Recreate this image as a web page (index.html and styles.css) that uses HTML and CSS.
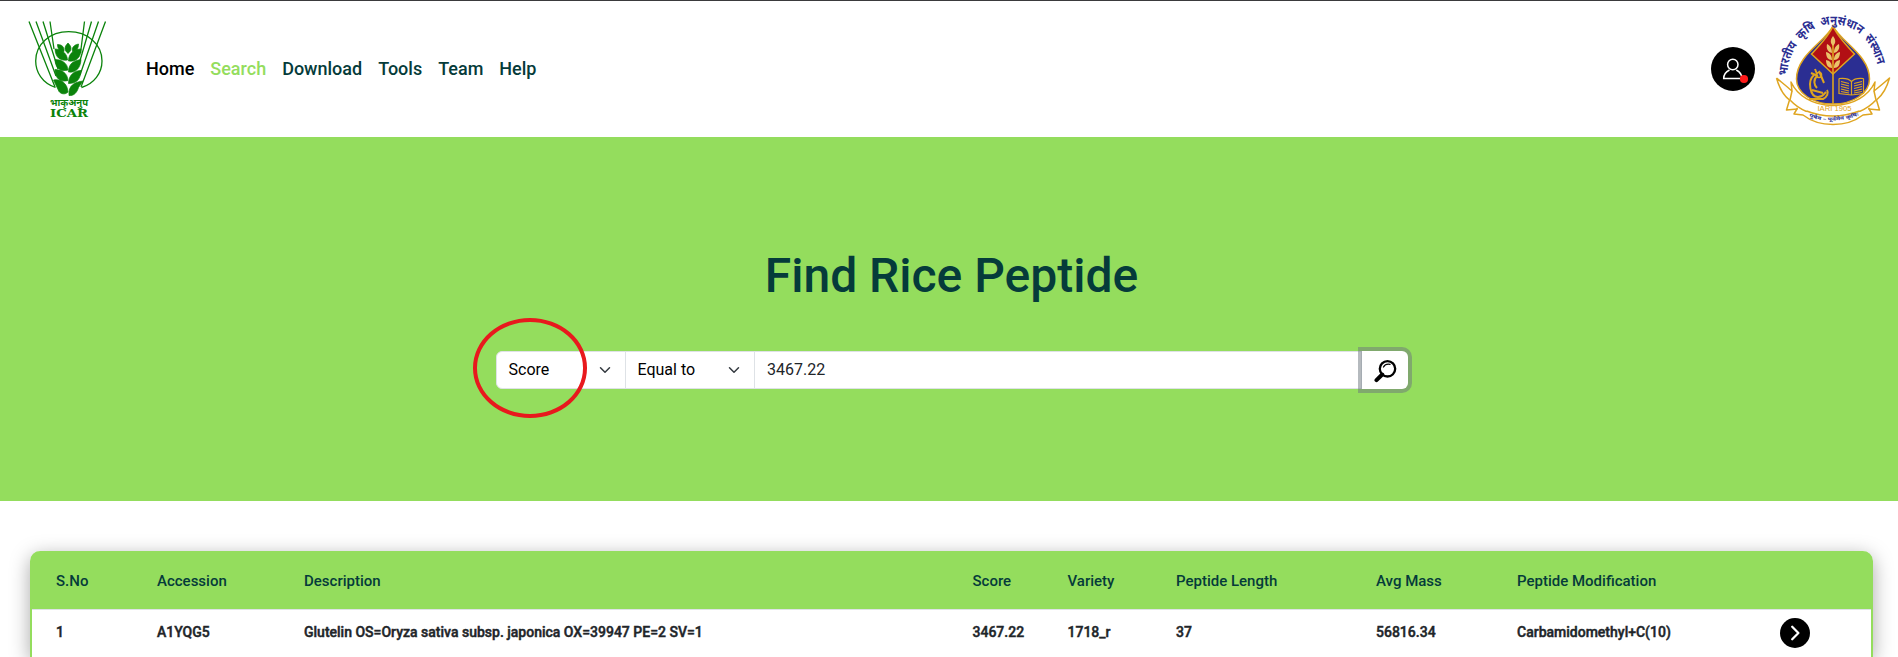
FILE: index.html
```html
<!DOCTYPE html>
<html lang="en">
<head>
<meta charset="utf-8">
<title>Find Rice Peptide</title>
<link rel="stylesheet" href="styles.css">
</head>
<body>
<header class="topbar">
  <svg class="icar" viewBox="26 18 84 102" role="img" aria-label="ICAR">
    <g fill="none" stroke="#0b830b" stroke-width="1.3">
      <path d="M29 21.500 55 87M36 21.500 56 76M43 21.500 58 69M50 21.500 54 49M105.500 21.500 81 87M98.500 21.500 80 75M91.500 21.500 79 64M84.500 21.500 80.500 53"/>
      <path d="M55.500 87.500C42 83 35.700 72 35.700 61 35.700 44 50 31.700 68.700 31.700S102 44 102 61C102 73 94 84 81.500 87.500"/>
    </g>
    <g fill="#0b830b" stroke="#0b830b" stroke-width=".7" stroke-linejoin="round">
      <path d="M55 49c5 0 12 3 12.500 11-7 1-12-2-12.500-11z"/>
      <path d="M55 59.500c6 0 12.500 3 13 10.500-7 2-12.500-1-13-10.500zM55 69.500c6 0 12.500 3 13 11-7 2-13-1.500-13-11zM53.500 80c7-1.500 14 3 14.500 12-3 3-7 2-9-.5z"/>
      <path d="M81 49c-5 0-12.500 3-12.500 12 7 1 12.500-3 12.500-12zM81 59.500c-6 1-12.500 3-12.500 12.500 7 1 12-3.500 12.500-12.500zM81 70.500c-7 0-12.500 5-12.500 13 8 0 12-4 12.500-13zM83 81c-8 1-15 4-14 14.500 5 .5 8-3 9.500-8z"/>
      <path d="M68 43c4 4 4 7 0 10.500-4-3.500-4-6.500 0-10.500zM57.500 44.500c5 0 7 3 6.500 7-4 0-6.500-2.500-6.500-7zM78.500 44c-5 1-7 4-6 7.500 4-.5 6-3 6-7.500z"/>
    </g>
    <text class="icar-hindi" x="69" y="105.500" textLength="38" lengthAdjust="spacingAndGlyphs">भाकृअनुप</text>
    <text class="icar-name" x="69" y="116.500" textLength="38" lengthAdjust="spacingAndGlyphs">ICAR</text>
  </svg>
  <nav class="nav">
    <a class="nav-home">Home</a><a class="nav-active">Search</a><a>Download</a><a>Tools</a><a>Team</a><a>Help</a>
  </nav>
  <svg class="user" viewBox="0 0 44 44">
    <circle cx="22" cy="22" r="22"/>
    <circle cx="21.800" cy="17.500" r="5.200" fill="none" stroke="#fff" stroke-width="1.500"/>
    <path d="M18.500 23C14.500 25 12.700 28 12.700 31.500H31C31 28 29 25 25.300 23" fill="none" stroke="#fff" stroke-width="1.500"/>
    <circle cx="33" cy="32" r="4.100" fill="#ff1a1a"/>
  </svg>
  <svg class="iari" viewBox="84 0 118 136" role="img" aria-label="IARI">
    <defs>
      <path id="arc" d="M97 75C98 49 117 23.500 143 23.500S186 44 190 78"/>
      <path id="motto" d="M118 115.500Q143 125 173 113"/>
    </defs>
    <path fill="#2b2e92" stroke="#dfa520" stroke-width="1.500" d="M143 25C135 41 106.500 54 106.500 78c0 14 16 25 36.500 25s36.500-11 36.500-25c0-24-28.500-37-36.500-53z"/>
    <path fill="#b20f14" stroke="#dfa520" stroke-width="1.500" d="M143 25c-4 10-13 19-21.500 28L143 73l21.500-20C156 44 147 35 143 25z"/>
    <g stroke="#dfa520" fill="none" stroke-width="1.600">
      <path d="M143 42v61"/>
      <path d="M125 68l2 5M121 72l7 3M124 74c-7 6-4 22 4 22 5 0 6-3 8-5M127 75c-4 4-3 9 0 12M119 98h14c4-2 6-6 4-9M129 70l5 12M122 89l11 3" stroke-width="2"/>
      <circle cx="129" cy="74" r="2.500"/>
      <path stroke-width="1.200" d="M149 77.500v15l12.500 1.500 12-1.500v-15M149 77.500q9-1 12.500 3 3.500-4 12-3M161.500 81v13M151 80.500l8 2M151 83l8 2M151 85.500l8 2M151 88l8 2M151 90.500l8 1.500M164 82.500l8-2M164 85l8-2M164 87.500l8-2M164 90l8-2M164 92l8-1.500"/>
    </g>
    <g fill="#eac36a">
      <path d="M143 35c3 4 3 7 0 10-3-3-3-6 0-10zM137 43c4 2 5 5 5 9-4-1-6-4-5-9zM149 43c-4 2-5 5-5 9 4-1 6-4 5-9zM136 51c5 1 6 5 6 8-4 0-6-3-6-8zM150 51c-5 1-6 5-6 8 4 0 6-3 6-8zM136 59c5 1 6 4 6 8-4 0-6-3-6-8zM150 59c-5 1-6 4-6 8 4 0 6-3 6-8z"/>
    </g>
    <g fill="none" stroke="#dfa520" stroke-width="1.500" stroke-linejoin="round">
      <path d="M86.500 77c6 5 11 9 15.500 13l-1-9c6 13 21 23.500 42 23.500s36-10.500 42-23.500l-1 9c5-4 10-8 15.500-13-3 11-8 18-13 22l3 10-11-1M86.500 77c3 11 8 18 13 22l-3 10 11-1"/>
      <path d="M100 99q7 7.500 16.500 11.500M186 99q-7 7.500-16.500 11.500M107.500 107l-3.500 6 9 1c9 7 19 9.500 30 9.500s21-2.500 30-9.500l9-1-3.500-6M116.500 110q26 10 53 0M102 90l-2 9M184 90l2 9"/>
    </g>
    <text class="iari-year" x="144.500" y="110.300" textLength="34" lengthAdjust="spacingAndGlyphs">IARI 1905</text>
    <text class="iari-name"><textPath href="#arc" textLength="141" lengthAdjust="spacingAndGlyphs">भारतीय कृषि अनुसंधान संस्थान</textPath></text>
    <text class="iari-motto"><textPath href="#motto" startOffset="1" textLength="51" lengthAdjust="spacingAndGlyphs">पूषैव – पूर्वमेव कृषिः</textPath></text>
  </svg>
</header>

<section class="hero">
  <h1 class="title">Find Rice Peptide</h1>
  <form class="search">
    <div class="select first">Score<svg class="chevron" viewBox="0 0 16 16"><path d="m2 5 6 6 6-6"/></svg></div>
    <div class="select">Equal to<svg class="chevron" viewBox="0 0 16 16"><path d="m2 5 6 6 6-6"/></svg></div>
    <div class="value">3467.22</div>
    <button class="go" type="button" aria-label="Search">
      <svg viewBox="0 0 24 24"><circle cx="14.500" cy="9.800" r="7.700" fill="none" stroke="#000" stroke-width="2.300"/><path d="M9.200 15.500 3.500 21.200" stroke="#000" stroke-width="4" stroke-linecap="round"/><path d="M10.500 8q2-3.500 6.500-2.600" fill="none" stroke="#000" stroke-width="1.300" stroke-linecap="round"/></svg>
    </button>
    <span class="marker"></span>
  </form>
</section>

<main class="results">
  <div class="row head">
    <span>S.No</span><span>Accession</span><span>Description</span><span>Score</span><span>Variety</span><span>Peptide Length</span><span>Avg Mass</span><span>Peptide Modification</span><span></span>
  </div>
  <div class="row item">
    <span>1</span><span>A1YQG5</span><span>Glutelin OS=Oryza sativa subsp. japonica OX=39947 PE=2 SV=1</span><span>3467.22</span><span>1718_r</span><span>37</span><span>56816.34</span><span>Carbamidomethyl+C(10)</span>
    <svg class="open" viewBox="0 0 30 30"><circle cx="15" cy="15" r="15"/><path d="M12.200 8.800 18.400 15 12.200 21.200" fill="none" stroke="#fff" stroke-width="2.300" stroke-linecap="round" stroke-linejoin="round"/></svg>
  </div>
</main>
</body>
</html>
```
FILE: styles.css
```css
* { box-sizing: border-box; }
body {
  margin: 0;
  height: 657px;
  overflow: hidden;
  background: #fff;
  color: #212529;
  font-family: Roboto, "Liberation Sans", sans-serif;
}
.topbar {
  display: flex;
  align-items: center;
  height: 137px;
  padding: 0 6px 0 26px;
  border-top: 1px solid #3a3a3c;
}
.icar { width: 84px; height: 102px; }
.icar-hindi { font: 700 10px "Noto Sans", sans-serif; fill: #0b830b; text-anchor: middle; }
.icar-name { font: 700 10.5px "DejaVu Serif", serif; fill: #0b830b; text-anchor: middle; }
.nav {
  display: flex;
  gap: 16px;
  margin: 0 auto 0 36px;
  padding-bottom: 2px;
  font-size: 18px;
  font-weight: 500;
  line-height: 27px;
  color: #053b3a;
}
.nav-home { color: #000; }
.nav-active { color: #94dd5d; }
.user { width: 44px; height: 44px; margin-right: 19px; }
.iari { width: 118px; height: 136px; overflow: visible; }
.iari-name { font: 700 12.5px "Noto Sans", sans-serif; word-spacing: 3px; fill: #2b2e92; }
.iari-year { font: 6.5px "Liberation Sans", sans-serif; fill: #dfa520; text-anchor: middle; }
.iari-motto { font: 700 5px "Noto Sans", sans-serif; fill: #2b2e92; }

.hero {
  height: 364px;
  padding-top: 110px;
  background: #94dd5d;
}
.title {
  margin: 0 0 46px;
  padding-left: 5px;
  text-align: center;
  font-size: 48px;
  font-weight: 500;
  line-height: 58px;
  color: #053b3a;
}
.search {
  position: relative;
  display: flex;
  width: 912px;
  height: 38px;
  margin-left: 496px;
  font-size: 16px;
}
.select, .value {
  display: flex;
  align-items: center;
  background: #fff;
  border: 1px solid #dee2e6;
  line-height: 24px;
}
.select {
  justify-content: space-between;
  width: 130px;
  margin-right: -1px;
  padding-left: 11.500px;
  padding-right: 12px;
  color: #000;
}
.first { border-radius: 6px 0 0 6px; }
.chevron { width: 16px; height: 12px; fill: none; stroke: #343a40; stroke-width: 2; stroke-linecap: round; stroke-linejoin: round; }
.value { flex: 1; padding-left: 12px; }
.go {
  display: flex;
  align-items: center;
  justify-content: center;
  width: 46px;
  padding: 0;
  border: 0;
  border-radius: 0 6px 6px 0;
  background: #fff;
  box-shadow: 0 0 0 4px rgba(108, 117, 125, .5);
}
.go svg { width: 24px; height: 24px; margin-top: 2px; }
.marker {
  position: absolute;
  left: -23.500px;
  top: -33.500px;
  width: 114.500px;
  height: 100px;
  border: 4px solid #e8191d;
  border-radius: 50%;
}

.results {
  height: 106px;
  margin: 50px 25px 0 30px;
  border: 2px solid #94dd5d;
  border-width: 0 2px;
  border-radius: 10px 10px 0 0;
  box-shadow: 0 5px 20px rgba(0, 0, 0, .35);
}
.row {
  display: grid;
  grid-template-columns: 101px 147px 668.500px 95px 108.500px 200px 141px 263px 1fr;
  align-items: center;
  padding-left: 24px;
}
.head {
  height: 58px;
  margin: 0 -1px;
  padding: 2px 0 0 25px;
  border-radius: 9px 9px 0 0;
  background: #94dd5d;
  color: #053b3a;
  font-size: 15px;
  font-weight: 500;
}
.item {
  height: 48px;
  border-top: 1px solid #dee2e6;
  font-size: 14px;
  font-weight: 500;
  -webkit-text-stroke: .45px #212529;
}
.item span { padding-bottom: 3px; }
.open { width: 30px; height: 30px; margin-bottom: 1px; -webkit-text-stroke: 0; }
```
